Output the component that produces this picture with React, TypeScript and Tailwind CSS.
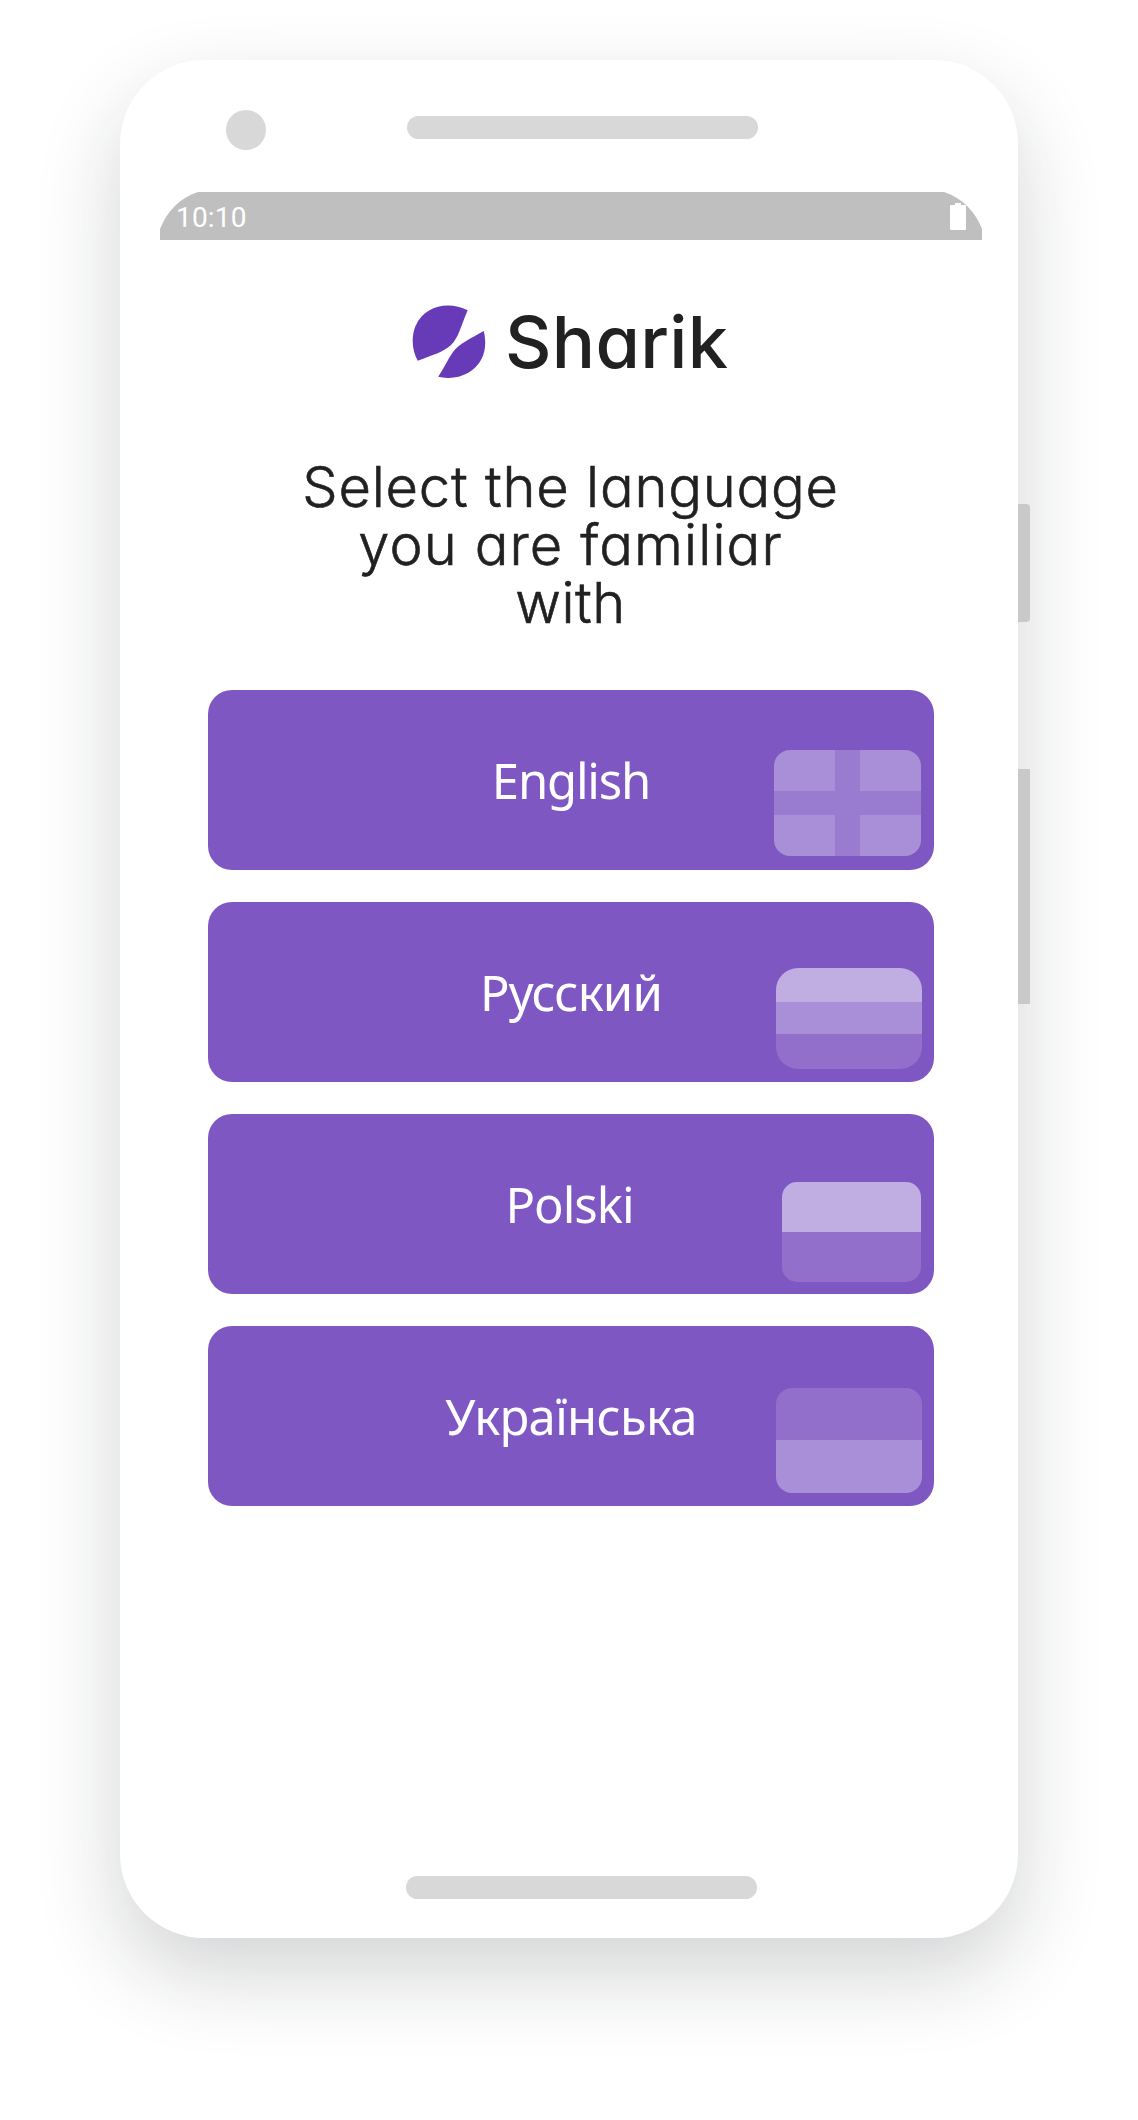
import type { ReactNode } from "react";

function Card({ label, labelClass, children }: { label: string; labelClass: string; children: ReactNode }) {
  return (
    <button className="relative block h-[180px] w-full rounded-[24px] bg-[#7e57c2] text-center text-white">
      <span className={`block whitespace-nowrap font-['Noto_Sans'] text-[49px] leading-[69px] ${labelClass}`}>{label}</span>
      {children}
    </button>
  );
}

export default function App() {
  return (
    <div className="relative flex h-[2120px] w-[1138px] flex-col overflow-hidden bg-white pl-[120px] pt-[60px] text-[#212121]">
      <main className="relative flex h-[1878px] w-[898px] flex-col rounded-[84px] bg-white shadow-[0_36px_84px_rgba(20,24,32,0.19)]">
        <div className="flex h-[132px] shrink-0 items-start">
          <div className="ml-[106px] mt-[50px] size-[40px] rounded-full bg-[#d8d8d8]" />
          <div className="ml-[141px] mt-[56px] h-[23px] w-[351px] rounded-full bg-[#d8d8d8]" />
        </div>

        <div className="relative ml-[40px] h-[48px] w-[822px] shrink-0">
          <svg className="absolute inset-0" width="822" height="48" viewBox="0 0 822 48">
            <path d="M0 48V37C7 19 20 6 38 0H784C802 6 815 19 822 37V48Z" fill="#bfbfbf" />
            <path d="M795 11h6v2h4q1 0 1 1v23q0 1-1 1h-14q-1 0-1-1V14q0-1 1-1h4Z" fill="#fff" />
          </svg>
          <span className="relative ml-[16px] block font-[Roboto] text-[28px] leading-[52px] tracking-[0.2px] text-white">10:10</span>
        </div>

        <div className="ml-[292px] mt-[65px] flex h-[73px] shrink-0">
          <svg width="74" height="73" viewBox="0 0 74 73" fill="#673ab7">
            <path d="M55.7 5.3C37-4 13 0 3.5 21C-1 32 0 45 5.7 55.7C21 50 31 47 38.5 40.5C47 33 49 20 55.7 5.3Z" />
            <path d="M71.7 26C58 34 48 38 41 47C36 54 32 63 26.2 71.8C43 76 62 69 69.5 54C74 45 74 35 71.7 26Z" />
          </svg>
          <span className="ml-[19px] block whitespace-nowrap font-[Inter] text-[72px] font-medium leading-[73px] tracking-[0.3px] [font-feature-settings:'cv11']">Sharik</span>
        </div>

        <h1 className="ml-[3px] mt-[80px] shrink-0 text-center font-[Inter] text-[56px] font-light leading-[58px] [-webkit-text-stroke:0.6px_#212121] [font-feature-settings:'cv11']">
          <span className="block tracking-[0.8px]">Select the language</span>
          <span className="block tracking-[1.1px]">you are familiar</span>
          <span className="block tracking-[0.5px]">with</span>
        </h1>

        <div className="ml-[88px] mt-[58px] flex w-[726px] flex-col gap-[32px]">
          <Card label="English" labelClass="tracking-[-1.2px]">
            <svg className="absolute bottom-[14px] right-[13.5px]" width="147" height="106" viewBox="0 0 147 106">
              <path d="M16 0H61V41H0V16A16 16 0 0 1 16 0ZM86 0H131A16 16 0 0 1 147 16V41H86ZM0 65H61V106H16A16 16 0 0 1 0 90ZM86 65H147V90A16 16 0 0 1 131 106H86Z" fill="#a98fd8" />
              <path d="M61 0H86V41H147V65H86V106H61V65H0V41H61Z" fill="#997bcf" />
            </svg>
          </Card>
          <Card label="Русский" labelClass="tracking-[-0.8px]">
            <div className="absolute bottom-[13.5px] right-[12px] flex h-[100.5px] w-[146px] flex-col overflow-hidden rounded-[22px]">
              <div className="h-[34px] bg-[#c0ade1]" />
              <div className="h-[32px] bg-[#a98fd8]" />
              <div className="flex-1 bg-[#916fcb]" />
            </div>
          </Card>
          <Card label="Polski" labelClass="tracking-[-1px] pr-[3px]">
            <div className="absolute bottom-[12px] right-[13px] flex h-[100px] w-[139px] flex-col overflow-hidden rounded-[15px]">
              <div className="h-[50px] bg-[#c0ade1]" />
              <div className="flex-1 bg-[#916fcb]" />
            </div>
          </Card>
          <Card label="Українська" labelClass="tracking-[-0.7px]">
            <div className="absolute bottom-[13px] right-[12px] flex h-[105px] w-[146px] flex-col overflow-hidden rounded-[16px]">
              <div className="h-[52px] bg-[#916fcb]" />
              <div className="flex-1 bg-[#a98fd8]" />
            </div>
          </Card>
        </div>

        <div className="mb-[39px] ml-[286px] mt-auto h-[23px] w-[351px] rounded-full bg-[#d8d8d8]" />

        <div className="absolute left-full top-[444px] h-[118px] w-[12px] rounded-r-[4px] bg-[#c9c9c9]" />
        <div className="absolute left-full top-[709px] h-[235px] w-[12px] bg-[#c9c9c9]" />
      </main>
    </div>
  );
}
